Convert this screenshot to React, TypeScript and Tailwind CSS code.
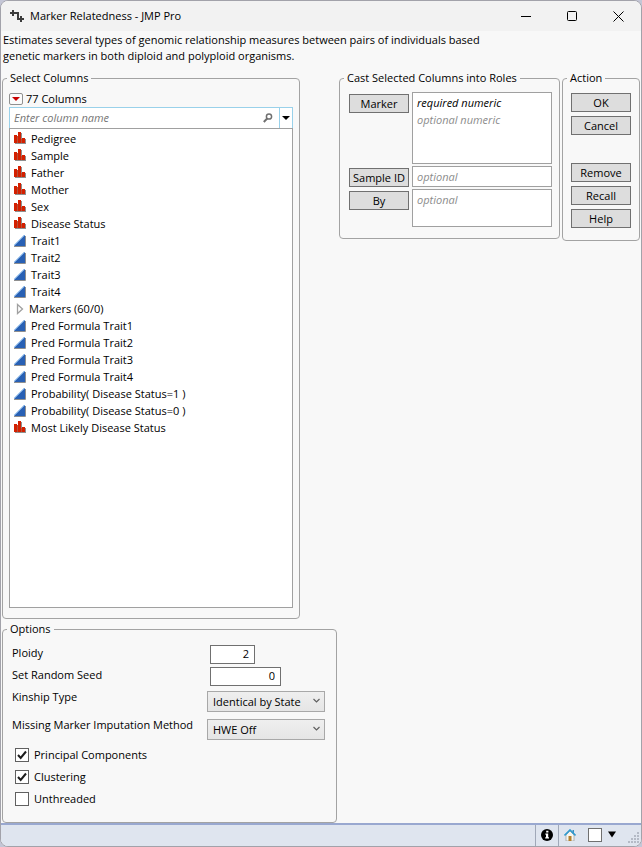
import { useState, type ReactNode } from "react";

type ColumnKind = "nominal" | "continuous" | "group";

interface ColumnItem {
  name: string;
  kind: ColumnKind;
}

const columns: ColumnItem[] = [
  { name: "Pedigree", kind: "nominal" },
  { name: "Sample", kind: "nominal" },
  { name: "Father", kind: "nominal" },
  { name: "Mother", kind: "nominal" },
  { name: "Sex", kind: "nominal" },
  { name: "Disease Status", kind: "nominal" },
  { name: "Trait1", kind: "continuous" },
  { name: "Trait2", kind: "continuous" },
  { name: "Trait3", kind: "continuous" },
  { name: "Trait4", kind: "continuous" },
  { name: "Markers (60/0)", kind: "group" },
  { name: "Pred Formula Trait1", kind: "continuous" },
  { name: "Pred Formula Trait2", kind: "continuous" },
  { name: "Pred Formula Trait3", kind: "continuous" },
  { name: "Pred Formula Trait4", kind: "continuous" },
  { name: "Probability( Disease Status=1 )", kind: "continuous" },
  { name: "Probability( Disease Status=0 )", kind: "continuous" },
  { name: "Most Likely Disease Status", kind: "nominal" },
];

function KindIcon({ kind }: { kind: ColumnKind }) {
  if (kind === "nominal") {
    return (
      <svg width="12" height="13" viewBox="0 0 12 13" shapeRendering="crispEdges">
        <path d="M1 4h3V1h4v6h4v5H1z" fill="#8f8f8f" />
        <path d="M0 3h3v8H0zM4 0h3v11H4zM8 6h3v5H8z" fill="#d42000" />
        <path d="M3 4h1v7H3zM7 7h1v4H7z" fill="#b4523c" />
      </svg>
    );
  }
  if (kind === "continuous") {
    return (
      <svg width="12" height="12" viewBox="0 0 12 12">
        <path d="M0 11L11 0v11z" fill="#2860b4" />
        <path d="M0 10.5L10.5 0" stroke="#5b9be0" />
        <path d="M0 11.5h11.5V1" stroke="#8f8f8f" fill="none" />
      </svg>
    );
  }
  return (
    <svg width="12" height="12" viewBox="0 0 12 12" fill="none">
      <path d="M3.5 1.5v9L8.5 6z" stroke="#a0a0a0" strokeWidth="1.3" />
    </svg>
  );
}

function Panel({
  title,
  className,
  bodyClassName,
  children,
}: {
  title: string;
  className: string;
  bodyClassName: string;
  children: ReactNode;
}) {
  return (
    <fieldset className={`flex min-w-0 flex-col rounded-sm border border-[#a3a3a3] px-1 ${className}`}>
      <legend className="px-[3px]">{title}</legend>
      <div className={`flex flex-1 flex-col ${bodyClassName}`}>{children}</div>
    </fieldset>
  );
}

function PushButton({ children }: { children: ReactNode }) {
  return (
    <button
      type="button"
      className="block h-[19px] w-[60px] flex-none border border-[#707070] bg-[#dddddd] text-center leading-4 whitespace-nowrap hover:bg-[#e8e8e8]"
    >
      {children}
    </button>
  );
}

function RoleRow({
  role,
  className,
  children,
}: {
  role: string;
  className: string;
  children: ReactNode;
}) {
  return (
    <div className="flex gap-[3px]">
      <div className="pt-[2px]">
        <PushButton>{role}</PushButton>
      </div>
      <div
        className={`flex-1 border border-[#a0a0a0] bg-white px-1 text-[#8c8c8c] italic leading-[17px] ${className}`}
      >
        {children}
      </div>
    </div>
  );
}

function Dropdown({ id, options }: { id: string; options: string[] }) {
  return (
    <div className="relative pt-[2px]">
      <select
        id={id}
        className="h-[21px] w-full appearance-none border border-[#a8a8a8] bg-linear-to-b from-[#efefef] to-[#e5e5e5] pl-[5px] leading-4"
      >
        {options.map((option) => (
          <option key={option}>{option}</option>
        ))}
      </select>
      <svg
        className="pointer-events-none absolute top-2 right-1"
        width="9"
        height="8"
        viewBox="0 0 9 8"
        fill="none"
      >
        <path d="M1.5 2L4.5 5l3-3" stroke="#606060" strokeWidth="1.2" />
      </svg>
    </div>
  );
}

function CheckOption({ label, initial }: { label: string; initial: boolean }) {
  const [checked, setChecked] = useState(initial);

  return (
    <label className="flex h-4 items-center gap-[5px]">
      <span className="grid">
        <input
          type="checkbox"
          checked={checked}
          onChange={(event) => setChecked(event.target.checked)}
          className="col-start-1 row-start-1 size-[14px] appearance-none border border-[#606060] bg-white"
        />
        {checked && (
          <svg
            className="pointer-events-none col-start-1 row-start-1"
            width="14"
            height="14"
            viewBox="0 0 14 14"
            fill="none"
          >
            <path d="M3 7l2.7 3L11 3.5" stroke="#1c1c1c" strokeWidth="2" />
          </svg>
        )}
      </span>
      {label}
    </label>
  );
}

function TitleBar() {
  return (
    <header className="flex h-[30px] flex-none items-center bg-[#f2f2f2] pl-2">
      <svg width="16" height="14" viewBox="0 0 16 14" fill="none" stroke="#3c3c3c" strokeWidth="2">
        <path d="M1 4h8v6h6M4 1v6M12 7v6" />
      </svg>
      <h1 className="flex-1 pl-[5px]">Marker Relatedness - JMP Pro</h1>
      <button type="button" aria-label="Minimize" className="grid h-full w-[46px] place-items-center">
        <svg width="11" height="11" viewBox="0 0 11 11" fill="none">
          <path d="M0 5.5h10" stroke="#000" />
        </svg>
      </button>
      <button type="button" aria-label="Maximize" className="grid h-full w-[46px] place-items-center">
        <svg width="11" height="11" viewBox="0 0 11 11" fill="none">
          <rect x="0.5" y="0.5" width="9" height="9" rx="1" stroke="#000" />
        </svg>
      </button>
      <button type="button" aria-label="Close" className="grid h-full w-[46px] place-items-center">
        <svg width="11" height="11" viewBox="0 0 11 11" fill="none">
          <path d="M0.5 0.5l10 10M10.5 0.5l-10 10" stroke="#000" />
        </svg>
      </button>
    </header>
  );
}

function StatusBar() {
  return (
    <footer className="flex h-[23px] flex-none items-stretch justify-end border-t-2 border-[#99a8d0] bg-[#dfe5ef]">
      <button
        type="button"
        aria-label="Information"
        className="grid w-[23px] place-items-center border-l border-[#a0a8b8] pb-[2px]"
      >
        <svg width="12" height="12" viewBox="0 0 12 12">
          <circle cx="6" cy="6" r="6" fill="#000" />
          <path d="M5.2 1.8h2.2v1.8H5.2zM4.4 4.6h2.8v3.6H8v1.3H4.200V8.200h.8V5.800h-.6z" fill="#fff" />
        </svg>
      </button>
      <button
        type="button"
        aria-label="Home window"
        className="grid w-[23px] place-items-center border-l border-[#a0a8b8] pb-[2px]"
      >
        <svg width="12" height="12" viewBox="0 0 12 12">
          <path d="M2 6l4-4 4 4v6H2z" fill="#f6f6f0" stroke="#8d8d8d" strokeWidth="0.6" />
          <path d="M8.5 1H10v3H8.5z" fill="#3c8fc0" />
          <path d="M0.5 6.5L6 1l5.5 5.5" fill="none" stroke="#2f9bd0" strokeWidth="1.6" />
          <path d="M4.5 7h3v5h-3z" fill="#b5802a" />
        </svg>
      </button>
      <div className="flex items-center gap-[5px] pr-[10px] pb-[2px] pl-[7px]">
        <input
          type="checkbox"
          aria-label="Keep window selected"
          className="size-[14px] appearance-none border border-[#707070] bg-white"
        />
        <button type="button" aria-label="Window menu">
          <svg width="10" height="7" viewBox="0 0 10 7">
            <path d="M1 0.5h8l-4 6z" fill="#000" />
          </svg>
        </button>
      </div>
      <svg className="self-end" width="14" height="14" viewBox="0 0 14 14" fill="#b4bac6">
        <path d="M10 0h2v2h-2zM7 3h2v2H7zM10 3h2v2h-2zM4 6h2v2H4zM7 6h2v2H7zM10 6h2v2h-2zM1 9h2v2H1zM4 9h2v2H4zM7 9h2v2H7zM10 9h2v2h-2z" />
      </svg>
    </footer>
  );
}

export default function App() {
  return (
    <div className="flex min-h-screen flex-col bg-[#c4c6d6] font-['Open_Sans',sans-serif] text-[11px] leading-4 text-black">
      <div className="flex flex-1 flex-col overflow-hidden rounded-lg border border-[#a2a2aa] bg-[#f8f8f8]">
        <TitleBar />

        <main className="flex flex-1 flex-col">
          <p className="max-w-[500px] px-[2px] pt-px">
            Estimates several types of genomic relationship measures between pairs of individuals based
            genetic markers in both diploid and polyploid organisms.
          </p>

          <div className="flex flex-1 items-start gap-[2px] px-px pt-[6px]">
            <div className="flex w-[335px] flex-none flex-col gap-[2px] self-stretch">
              {/* Column picker */}
              <Panel
                title="Select Columns"
                className="mr-[37px] flex-1"
                bodyClassName="px-[2px] pt-1 pb-[10px]"
              >
                <div className="flex h-[17px] items-center gap-[3px]">
                  <button
                    type="button"
                    aria-label="Column list options"
                    className="grid h-[12px] w-[14px] place-items-center rounded-xs border border-[#909090] bg-[#fbfbfb]"
                  >
                    <svg width="8" height="4" viewBox="0 0 8 4">
                      <path d="M0 0h8L4 4z" fill="#c80000" />
                    </svg>
                  </button>
                  77 Columns
                </div>
                <div className="flex h-[21px] flex-none border border-b-0 border-[#99d1ea] bg-white">
                  <input
                    type="text"
                    aria-label="Column name"
                    placeholder="Enter column name"
                    className="min-w-0 flex-1 px-1 italic outline-none placeholder:text-[#757575]"
                  />
                  <svg
                    className="mr-[6px] self-center"
                    width="10"
                    height="10"
                    viewBox="0 0 10 10"
                    fill="none"
                    stroke="#707070"
                  >
                    <circle cx="6" cy="3.5" r="2.6" strokeWidth="1.5" />
                    <path d="M4.2 5.5L0.8 9" strokeWidth="2" />
                  </svg>
                  <button
                    type="button"
                    aria-label="Search options"
                    className="grid w-[13px] place-items-center border-l border-[#99d1ea]"
                  >
                    <svg width="8" height="4" viewBox="0 0 8 4">
                      <path d="M0 0h8L4 4z" fill="#000" />
                    </svg>
                  </button>
                </div>
                <ul className="flex-1 border border-[#a0a0a0] bg-white pt-px pl-1">
                  {columns.map((column) => (
                    <li
                      key={column.name}
                      className={`flex h-[17px] items-center ${column.kind === "group" ? "gap-[3px]" : "gap-[5px]"}`}
                    >
                      <KindIcon kind={column.kind} />
                      {column.name}
                    </li>
                  ))}
                </ul>
              </Panel>

              {/* Launch options */}
              <Panel title="Options" className="flex-none" bodyClassName="px-[5px] pt-2 pb-[15px]">
                <div className="grid grid-cols-[195px_118px] grid-rows-[22px_22px_28px_28px] items-start">
                  <label htmlFor="ploidy">Ploidy</label>
                  <input
                    id="ploidy"
                    type="text"
                    defaultValue="2"
                    className="ml-[3px] h-[19px] w-[45px] border border-[#707070] bg-white pr-[5px] pb-[2px] text-right leading-4"
                  />
                  <label htmlFor="seed">Set Random Seed</label>
                  <input
                    id="seed"
                    type="text"
                    defaultValue="0"
                    className="ml-[3px] h-[19px] w-[71px] border border-[#707070] bg-white pr-[5px] pb-[2px] text-right leading-4"
                  />
                  <label htmlFor="kinship">Kinship Type</label>
                  <Dropdown id="kinship" options={["Identical by State"]} />
                  <label htmlFor="imputation">Missing Marker Imputation Method</label>
                  <Dropdown id="imputation" options={["HWE Off"]} />
                </div>
                <div className="flex flex-col gap-[6px] pt-[2px] pl-[3px]">
                  <CheckOption label="Principal Components" initial={true} />
                  <CheckOption label="Clustering" initial={true} />
                  <CheckOption label="Unthreaded" initial={false} />
                </div>
              </Panel>
            </div>

            {/* Roles */}
            <Panel
              title="Cast Selected Columns into Roles"
              className="w-[221px] flex-none"
              bodyClassName="gap-[2px] pt-[6px] pr-[3px] pb-[11px] pl-[5px]"
            >
              <RoleRow role="Marker" className="h-[72px] pt-px">
                <div className="text-black">required numeric</div>
                <div>optional numeric</div>
              </RoleRow>
              <RoleRow role="Sample ID" className="h-[21px] pt-px">
                optional
              </RoleRow>
              <RoleRow role="By" className="h-[38px] pt-px">
                optional
              </RoleRow>
            </Panel>

            <Panel
              title="Action"
              className="w-[78px] flex-none"
              bodyClassName="items-center gap-7 pt-[7px] pb-[12px]"
            >
              <div className="flex flex-col gap-1">
                <PushButton>OK</PushButton>
                <PushButton>Cancel</PushButton>
              </div>
              <div className="flex flex-col gap-1">
                <PushButton>Remove</PushButton>
                <PushButton>Recall</PushButton>
                <PushButton>Help</PushButton>
              </div>
            </Panel>
          </div>
        </main>

        <StatusBar />
      </div>
    </div>
  );
}
